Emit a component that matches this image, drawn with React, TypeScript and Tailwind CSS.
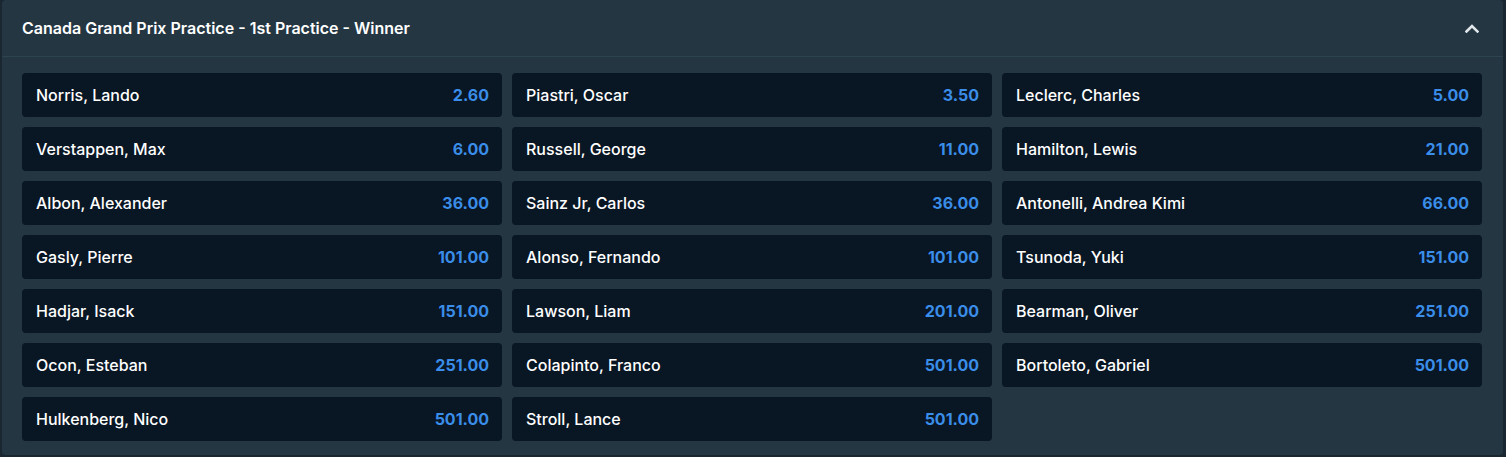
import React from "react";

const rows: [string, string][] = [
  ["Norris, Lando", "2.60"],
  ["Piastri, Oscar", "3.50"],
  ["Leclerc, Charles", "5.00"],
  ["Verstappen, Max", "6.00"],
  ["Russell, George", "11.00"],
  ["Hamilton, Lewis", "21.00"],
  ["Albon, Alexander", "36.00"],
  ["Sainz Jr, Carlos", "36.00"],
  ["Antonelli, Andrea Kimi", "66.00"],
  ["Gasly, Pierre", "101.00"],
  ["Alonso, Fernando", "101.00"],
  ["Tsunoda, Yuki", "151.00"],
  ["Hadjar, Isack", "151.00"],
  ["Lawson, Liam", "201.00"],
  ["Bearman, Oliver", "251.00"],
  ["Ocon, Esteban", "251.00"],
  ["Colapinto, Franco", "501.00"],
  ["Bortoleto, Gabriel", "501.00"],
  ["Hulkenberg, Nico", "501.00"],
  ["Stroll, Lance", "501.00"],
];

export default function App() {
  return (
    <div
      className="w-[1506px] h-[457px] bg-[#1a2630] pl-[2px]"
      style={{ fontFamily: "Inter, 'Noto Sans', sans-serif" }}
    >
      <div className="w-[1501px] h-[455px] bg-[#233642] rounded-[4px] flex flex-col">
        <div className="h-[57px] flex items-center justify-between pl-5 pr-[24px] border-b border-[#2e4350]">
          <span className="text-[16px] font-semibold text-white">
            Canada Grand Prix Practice - 1st Practice - Winner
          </span>
          <svg width="14" height="9" viewBox="0 0 14 9" fill="none">
            <path d="M1.5 7.5 L7 2 L12.5 7.5" stroke="#e3e8ec" strokeWidth="2.6" strokeLinecap="square" />
          </svg>
        </div>
        <div className="grid grid-cols-3 gap-[10px] pt-4 pl-5 pr-[21px]">
          {rows.map(([name, odds]) => (
            <div
              key={name}
              className="h-11 bg-[#091623] rounded-[4px] flex items-center justify-between pl-[14px] pr-[13px]"
            >
              <span className="text-[16px] font-medium text-white">{name}</span>
              <span className="text-[16px] font-bold text-[#3a8de8]">{odds}</span>
            </div>
          ))}
        </div>
      </div>
    </div>
  );
}
